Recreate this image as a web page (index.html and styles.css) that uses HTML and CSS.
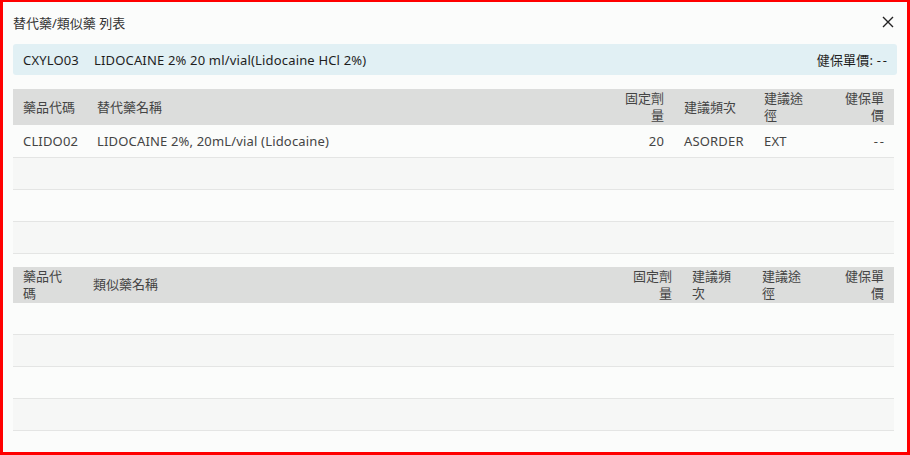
FILE: index.html
```html
<!DOCTYPE html>
<html lang="zh-Hant">
<head>
<meta charset="utf-8">
<title>替代藥/類似藥 列表</title>
<link rel="stylesheet" href="styles.css">
</head>
<body>
<div class="modal">
  <div class="modal-head">
    <span class="title">替代藥/類似藥 列表</span>
    <button class="close" aria-label="close">
      <svg width="12" height="12" viewBox="0 0 12 12"><path d="M1 1 L11 11 M11 1 L1 11" stroke="#222" stroke-width="1.4" fill="none"/></svg>
    </button>
  </div>
  <div class="info">
    <span class="code">CXYLO03</span>
    <span class="name">LIDOCAINE 2% 20 ml/vial(Lidocaine HCl 2%)</span>
    <span class="price">健保單價: <span class="dash">--</span></span>
  </div>

  <table class="grid grid-sub">
    <colgroup>
      <col class="c-code"><col><col class="c-dose"><col class="c-freq"><col class="c-route"><col class="c-price">
    </colgroup>
    <thead>
      <tr>
        <th>藥品代碼</th><th>替代藥名稱</th><th class="num">固定劑量</th><th>建議頻次</th><th>建議途徑</th><th class="num wide">健保單價</th>
      </tr>
    </thead>
    <tbody>
      <tr><td>CLIDO02</td><td>LIDOCAINE 2%, 20mL/vial (Lidocaine)</td><td class="num">20</td><td>ASORDER</td><td>EXT</td><td class="num"><span class="dash">--</span></td></tr>
      <tr><td></td><td></td><td></td><td></td><td></td><td></td></tr>
      <tr><td></td><td></td><td></td><td></td><td></td><td></td></tr>
      <tr><td></td><td></td><td></td><td></td><td></td><td></td></tr>
    </tbody>
  </table>

  <table class="grid grid-sim">
    <colgroup>
      <col class="c-code"><col><col class="c-dose"><col class="c-freq"><col class="c-route"><col class="c-price">
    </colgroup>
    <thead>
      <tr>
        <th>藥品代碼</th><th>類似藥名稱</th><th class="num">固定劑量</th><th>建議頻次</th><th>建議途徑</th><th class="num wide">健保單價</th>
      </tr>
    </thead>
    <tbody>
      <tr><td></td><td></td><td></td><td></td><td></td><td></td></tr>
      <tr><td></td><td></td><td></td><td></td><td></td><td></td></tr>
      <tr><td></td><td></td><td></td><td></td><td></td><td></td></tr>
      <tr><td></td><td></td><td></td><td></td><td></td><td></td></tr>
    </tbody>
  </table>
</div>
</body>
</html>
```

FILE: styles.css
```css
* { box-sizing: border-box; }
html, body { margin: 0; padding: 0; }
body {
  font-family: "Noto Sans", "Noto Sans CJK TC", sans-serif;
  font-size: 13px;
  color: #444;
  background: #fbfcfb;
}
.modal {
  width: 910px;
  height: 455px;
  border-style: solid;
  border-color: #ff0000;
  border-width: 2px 3px 3px 3px;
  padding: 0 10px;
  background: #fbfcfb;
  overflow: hidden;
}
.modal-head {
  height: 40px;
  display: flex;
  align-items: center;
  justify-content: space-between;
  margin-bottom: 2px;
}
.title {
  font-size: 13px;
  color: #333;
}
.close {
  border: 0;
  background: none;
  padding: 0;
  margin-right: 3px;
  width: 12px;
  height: 12px;
  display: flex;
}
.info {
  height: 31px;
  display: flex;
  align-items: center;
  padding: 0 10px;
  background: #e1f0f4;
  border-radius: 3px;
  color: #1e1e1e;
  letter-spacing: 0.17px;
  white-space: nowrap;
}
.info .code { margin-right: 15px; }
.info .price { margin-left: auto; }
.dash { letter-spacing: 2px; margin-right: -2px; }

.grid {
  width: 881px;
  border-collapse: collapse;
  table-layout: fixed;
  margin-top: 14px;
}
.grid-sim { margin-top: 13px; }
.grid th {
  background: #dcdddc;
  font-weight: normal;
  text-align: left;
  color: #444;
  height: 36px;
  line-height: 17px;
  padding: 1px 10px;
  vertical-align: middle;
}
.grid td {
  height: 32px;
  padding: 0 10px;
  border-bottom: 1px solid #e4e5e4;
  color: #444;
  white-space: nowrap;
  letter-spacing: 0.17px;
}
.grid tbody tr:nth-child(even) td { background: #f6f7f6; }
.grid .num { text-align: right; }
.grid th.wide { padding-left: 20px; }

.grid-sub .c-code { width: 74px; }
.grid-sub .c-dose { width: 60px; }
.grid-sub .c-freq { width: 80px; }
.grid-sub .c-route { width: 65px; }
.grid-sub .c-price { width: 75px; }

.grid-sim .c-code { width: 70px; }
.grid-sim .c-dose { width: 60px; }
.grid-sim .c-freq { width: 70px; }
.grid-sim .c-route { width: 71px; }
.grid-sim .c-price { width: 71px; }
```
